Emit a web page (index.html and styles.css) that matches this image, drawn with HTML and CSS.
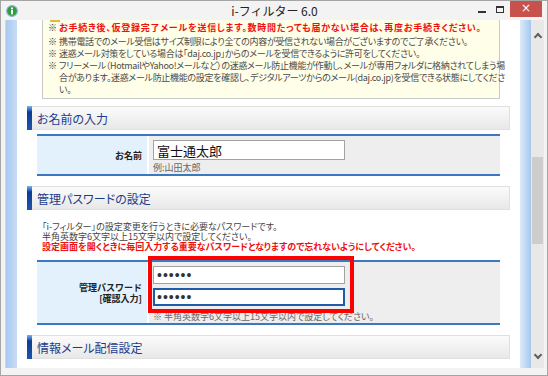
FILE: index.html
```html
<!DOCTYPE html>
<html lang="ja">
<head>
    <meta charset="UTF-8">
    <title>i-フィルター 6.0</title>
    <link rel="stylesheet" href="styles.css">
</head>
<body>
<div class="window">
    <div class="titlebar">
        <span class="app-icon">
            <svg width="12" height="12" viewBox="0 0 12 12">
                <circle cx="6" cy="6" r="5.4" fill="#2f9e3a" stroke="#8fb6dc" stroke-width="1.2"/>
                <circle cx="6" cy="3.4" r="1.1" fill="#fff"/>
                <rect x="5" y="5" width="2" height="4.4" fill="#fff"/>
            </svg>
        </span>
        <span class="title">i-フィルター 6.0</span>
        <div class="controls">
            <span class="ctl min"></span>
            <span class="ctl max"></span>
            <span class="ctl close">×</span>
        </div>
    </div>

    <div class="client">
        <div class="viewport">
            <div class="page">
                <div class="column">
                    <div class="notes">
                        <span class="notes-icon"></span>
                        <ul>
                            <li><span class="mark">※</span><span class="warn">お手続き後、仮登録完了メールを送信します。数時間たっても届かない場合は、再度お手続きください。</span></li>
                            <li><span class="mark">※</span>携帯電話でのメール受信はサイズ制限により全ての内容が受信されない場合がございますのでご了承ください。</li>
                            <li><span class="mark">※</span>迷惑メール対策をしている場合は「daj.co.jp」からのメールを受信できるように許可をしてください。</li>
                            <li><span class="mark">※</span>フリーメール（HotmailやYahoo!メールなど）の迷惑メール防止機能が作動し、メールが専用フォルダに格納されてしまう場<br>合があります。迷惑メール防止機能の設定を確認し、デジタルアーツからのメール(daj.co.jp)を受信できる状態にしてくださ<br>い。</li>
                        </ul>
                    </div>

                    <h2 class="section">お名前の入力</h2>
                    <div class="form-row">
                        <div class="label">お名前</div>
                        <div class="value">
                            <input class="text-input name-input" type="text" value="富士通太郎">
                            <div class="hint">例:山田太郎</div>
                        </div>
                    </div>

                    <h2 class="section">管理パスワードの設定</h2>
                    <p class="desc">
                        「i-フィルター」の設定変更を行うときに必要なパスワードです。<br>
                        半角英数字6文字以上15文字以内で設定してください。<br>
                        <span class="warn">設定画面を開くときに毎回入力する重要なパスワードとなりますので忘れないようにしてください。</span>
                    </p>
                    <div class="form-row">
                        <div class="label">管理パスワード<br>[確認入力]</div>
                        <div class="value pw-fields">
                            <input class="text-input pw" type="password" value="abcdef">
                            <input class="text-input pw focused" type="password" value="abcdef">
                            <div class="hint pw-hint">※ 半角英数字6文字以上15文字以内で設定してください。</div>
                            <span class="highlight"></span>
                        </div>
                    </div>

                    <h2 class="section">情報メール配信設定</h2>
                    <p class="desc">デジタルアーツからの新製品情報やキャンペーン情報などをお届けします。</p>
                </div>
            </div>
        </div>
        <div class="scrollbar">
            <span class="arrow up"></span>
            <div class="track"><span class="thumb"></span></div>
            <span class="arrow down"></span>
        </div>
    </div>
</div>
</body>
</html>
```

FILE: styles.css
```css
* {
    box-sizing: border-box;
}
body {
    margin: 0;
    font-family: "Noto Sans CJK JP", sans-serif;
}
.window {
    width: 548px;
    height: 376px;
    background: #f3f3f3;
    border: 1px solid #a5a5a5;
    padding: 0 3px 7px 4px;
    display: flex;
    flex-direction: column;
}

/* title bar */
.titlebar {
    height: 19px;
    display: grid;
    grid-template-columns: 1fr auto 1fr;
    align-items: center;
}
.app-icon {
    padding-left: 1px;
    display: flex;
}
.title {
    font-size: 12px;
    color: #222;
    line-height: 19px;
}
.controls {
    justify-self: end;
    align-self: start;
    display: flex;
    align-items: center;
}
.ctl {
    display: block;
}
.min {
    width: 8px;
    height: 2px;
    background: #333;
    margin: 6px 10px 0 0;
}
.max {
    width: 8px;
    height: 7px;
    border: 1px solid #333;
    border-top-width: 2px;
    margin-right: 6px;
}
.close {
    width: 32px;
    height: 16px;
    background: #c9514c;
    color: #fff;
    font-family: "DejaVu Sans", sans-serif;
    font-size: 12px;
    line-height: 15px;
    text-align: center;
    margin-right: 2px;
}

/* client area */
.client {
    flex: 1;
    display: flex;
    border-left: 1px solid #d6d6d6;
    min-height: 0;
}
.viewport {
    width: 525px;
    overflow: hidden;
}
.page {
    min-height: 100%;
    padding: 0 11px;
    background: linear-gradient(to right, #a9c9ef 0, #c7ddf5 11px, #fff 11px, #fff 514px, #dcebfa 514px, #a6c7ee 525px);
}
.column {
    background: #fff;
    padding-bottom: 40px;
}

/* notes box */
.notes {
    margin: 0 20px 0 25px;
    background: #fffee8;
    border: 1px solid #c9c9c9;
    border-top: none;
    padding: 0 0 2px 5px;
}
.notes-icon {
    display: block;
    width: 10px;
    height: 2px;
    margin-left: 2px;
    background: #e8b830;
}
.notes ul {
    list-style: none;
    margin: 0;
    padding: 0;
}
.notes li {
    font-size: 9px;
    line-height: 12px;
    color: #4a4a4a;
    white-space: nowrap;
    padding-left: 11px;
    text-indent: -11px;
    letter-spacing: -0.3px;
    font-feature-settings: "palt";
}
.notes li:first-child {
    margin-bottom: 2px;
}
.notes .warn {
    letter-spacing: 0.75px;
}
.mark {
    display: inline-block;
    width: 11px;
    text-indent: 0;
    letter-spacing: 0;
    color: #333;
}
.warn {
    color: #f01010;
    font-weight: bold;
}

/* section headings */
.section {
    margin: 7px 10px 0;
    height: 24px;
    display: flex;
    align-items: center;
    background: linear-gradient(#fbfbfb, #e8e8e8);
    border: 1px solid #e0e0e0;
    font-size: 12px;
    font-weight: normal;
    color: #1d3c8a;
    font-feature-settings: "palt";
}
.section::before {
    content: "";
    align-self: stretch;
    width: 5px;
    margin: -1px 5px -1px -1px;
    background: linear-gradient(#7fb0ea 0, #3f7fd0 3px, #0c3d92 6px, #1d55aa 100%);
}
.form-row + .section {
    margin-top: 10px;
}

/* form rows */
.form-row {
    margin: 4px 20px 0;
    display: flex;
    border-top: 2px solid #3b78c2;
    border-bottom: 2px solid #3b78c2;
}
.label {
    width: 112px;
    flex-shrink: 0;
    background: #e2f1fb;
    border-right: 2px solid #fff;
    font-size: 9px;
    font-weight: bold;
    line-height: 11px;
    color: #222;
    text-align: right;
    padding-right: 5px;
    display: flex;
    align-items: center;
    justify-content: flex-end;
}
.value {
    flex: 1;
    background: #eeeeee;
    padding: 4px 0 1px 4px;
}
.text-input {
    display: block;
    width: 192px;
    background: #fff;
    border: 1px solid #a3a3a3;
    outline: none;
    padding: 0 3px;
    margin: 0;
}
.name-input {
    height: 20px;
    font-family: "Noto Sans CJK JP", sans-serif;
    font-size: 13px;
    color: #111;
}
.hint {
    font-size: 9px;
    line-height: 11px;
    color: #666;
    margin-top: 2px;
    font-feature-settings: "palt";
}
.pw-fields {
    position: relative;
}
.pw {
    height: 18px;
    font-family: "Liberation Sans", sans-serif;
    font-size: 14px;
    letter-spacing: 1px;
    color: #333;
}
.pw + .pw {
    margin-top: 4px;
}
.focused {
    border: 2px solid #1f5ca8;
    padding: 0 2px;
}
.pw-hint {
    margin-top: 6px;
    line-height: 10px;
}
.highlight {
    position: absolute;
    left: -1px;
    top: -6px;
    width: 206px;
    height: 57px;
    border: 4px solid #ff0000;
}

.desc {
    margin: 12px 20px 0 25px;
    font-size: 9px;
    line-height: 10px;
    color: #444;
    font-feature-settings: "palt";
}
.desc + .form-row {
    margin-top: 8px;
}

/* scrollbar */
.scrollbar {
    width: 13px;
    background: #e8e8e8;
    display: flex;
    flex-direction: column;
    align-items: center;
}
.arrow {
    display: block;
    width: 6px;
    height: 6px;
    border-left: 2px solid #606060;
    border-top: 2px solid #606060;
}
.up {
    transform: rotate(45deg);
    margin: 14px 0 0;
}
.down {
    transform: rotate(225deg);
    margin: 0 0 10px;
}
.track {
    flex: 1;
    width: 100%;
    padding-top: 117px;
}
.thumb {
    display: block;
    width: 11px;
    height: 87px;
    margin: 0 auto;
    background: #cdcdcd;
}
```
